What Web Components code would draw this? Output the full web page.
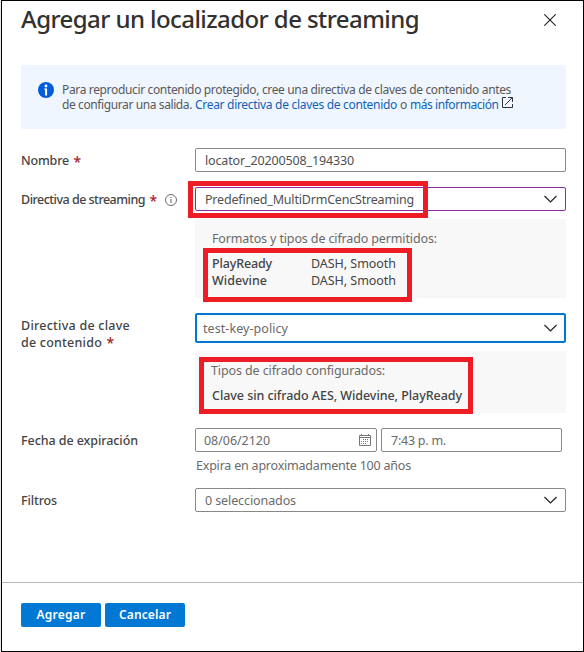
<!DOCTYPE html>
<html lang="es">
<head>
<meta charset="utf-8">
<title>Agregar un localizador de streaming</title>
<style>
html,body{margin:0;width:584px;height:652px;overflow:hidden;background:#e9e9ee}
body{font-family:"Noto Sans","Open Sans",sans-serif;font-size:12.5px;color:#505050}
</style>
</head>
<body>
<locator-dialog></locator-dialog>
<script>
const define = (name, html, setup) => customElements.define(name, class extends HTMLElement {
  connectedCallback() {
    if (this.shadowRoot) return;
    this.attachShadow({mode: 'open'}).innerHTML = html;
    if (setup) setup(this, this.shadowRoot);
  }
});

/* One run of text, tracked so that it spans the width given in "w". */
define('fit-text', `<style>
:host{display:inline-block;white-space:pre;line-height:16px;padding-top:2px;flex:none}
:host([bold]){font-weight:500}
:host([bold=strong]){font-weight:600}
:host([link]){color:#0f62b8}
span{display:inline-block}
</style><span><slot></slot></span>`, (host, root) => {
  const w = parseFloat(host.getAttribute('w'));
  const size = host.getAttribute('size');
  if (size) host.style.fontSize = size + 'px';
  const natural = root.querySelector('span').getBoundingClientRect().width;
  host.style.letterSpacing = ((w - natural) / host.textContent.length) + 'px';
  host.style.width = w + 'px';
});

define('info-badge', `<style>:host{display:block;width:16px;height:16px}svg{display:block}</style>
<svg width="16" height="16" viewBox="0 0 16 16"><circle cx="8" cy="8" r="8" fill="#015cda"/><circle cx="8" cy="4" r="1.4" fill="#fff"/><path d="M6.3 6.5H9.1V13.5H7.1V7.8H6.3z" fill="#fff"/></svg>`);

define('info-outline', `<style>:host{display:block;width:12px;height:12px}svg{display:block}</style>
<svg width="12" height="12" viewBox="0 0 12 12"><circle cx="6" cy="6" r="5.5" fill="none" stroke="#605e5c" stroke-width=".9"/><path d="M6 5V9M6 3V4" stroke="#605e5c"/></svg>`);

define('close-icon', `<style>:host{display:block;width:12px;height:12px}svg{display:block}</style>
<svg width="12" height="12" viewBox="0 0 12 12"><path d="M.3 .3L11.700 11.700M11.700 .3L.3 11.700" stroke="#222" stroke-width="1.1"/></svg>`);

define('external-icon', `<style>:host{display:block;width:11px;height:11px}svg{display:block}</style>
<svg width="11" height="11" viewBox="0 0 11 11" fill="none" stroke="#333" stroke-width="1"><path d="M4 .5H.5V10.5H10.5V7M6 .5H10.5V5M10.200 .8L3 8"/></svg>`);

define('calendar-icon', `<style>:host{display:block;width:12px;height:12px}svg{display:block}</style>
<svg width="12" height="12" viewBox="0 0 12 12" fill="none" stroke="#777"><path d="M.5 1.500H11.500V11.500H.5zM.5 3.500H11.500M2.500 0V2M9.500 0V2"/><path d="M4 5.500H10M2 7.500H10M2 9.500H8" stroke-dasharray="1 1"/></svg>`);

define('required-mark', `<style>:host{display:block;width:6px;height:17px;color:#a4262c;font:600 14px/19px "Open Sans","Noto Sans",sans-serif;text-indent:-.5px}</style>*`);

define('info-banner', `<style>
:host{display:flex;box-sizing:border-box;width:545px;height:64px;padding:17px 0 0 17px;background:#eff6ff;border-radius:2px;color:#595959}
.copy{margin-left:8px}
.line{display:flex;height:15px;align-items:center;gap:4px}
.line+.line{gap:3px}
.line fit-text{line-height:15px;padding-top:0;height:15px}
external-icon{margin-top:-4px}
</style><info-badge></info-badge><div class="copy">
<div class="line"><fit-text w="449" size="12">Para reproducir contenido protegido, cree una directiva de claves de contenido antes</fit-text></div>
<div class="line"><fit-text w="130" size="12">de configurar una salida.</fit-text><fit-text link w="202" size="12">Crear directiva de claves de contenido</fit-text><fit-text w="7" size="12">o</fit-text><fit-text link w="88.500" size="12">más información</fit-text><external-icon></external-icon></div></div>`);

/* Bordered field; attribute "arrow" adds the chevron, "tone" picks the border. */
define('field-box', `<style>
:host{display:flex;align-items:center;box-sizing:border-box;width:371px;height:24px;border:1px solid #8a8886;border-radius:2px;background:#fff;padding-left:var(--inset,9px);padding-right:10px;color:#505050}
:host([tone=purple]){border-color:#8a2da5}
:host([tone=blue]){border:2px solid #0078d4;height:30px}
svg{display:none;margin-left:auto;flex:none}
:host([arrow]) svg{display:block}
:host([arrow]){padding-right:8px}
:host([arrow][tone=blue]){padding-right:7px}
::slotted(calendar-icon){margin-left:auto;margin-right:-5px}
</style><slot></slot><svg width="13" height="8" viewBox="0 0 13 8"><path d="M.5 1L6.500 7L12.500 1" fill="none" stroke="#222" stroke-width="1.2"/></svg>`);

define('form-row', `<style>
:host{display:grid;grid-template-columns:174px 1fr;align-items:start}
.label{display:flex;flex-wrap:wrap;gap:0 5px;align-items:center;padding-top:var(--label-top,3px)}
</style><div class="label"><slot name="label"></slot></div><div><slot></slot></div>`);

define('detail-panel', `<style>
:host{display:block;box-sizing:border-box;width:371px;background:#f8f8f8;padding:10px 0 0 17px;margin-top:8px;color:#444}
</style><slot></slot>`);

define('push-button', `<style>
:host{display:flex;width:80px;height:24px;align-items:center;justify-content:center;background:#0078d4;border-radius:2px;color:#fff}
</style><slot></slot>`);

/* Red callout outline laid over the form. */
define('callout-frame', `<style>:host{display:block;position:absolute;box-sizing:border-box;border:5px solid #ee1c25}</style>`, host => {
  const [x, y, w, h] = host.getAttribute('box').split(' ');
  Object.assign(host.style, {left: x + 'px', top: y + 'px', width: w + 'px', height: h + 'px'});
});

define('locator-dialog', `<style>
:host{display:flex;flex-direction:column;position:relative;box-sizing:border-box;width:583px;height:652px;margin-left:1px;border:1px solid #000;background:#fff}
header{display:flex;height:64px;padding:0 27px 0 19px;box-sizing:border-box;align-items:flex-start;justify-content:space-between;color:#323130}
header fit-text{line-height:36px;padding-top:0}
header close-icon{margin-top:13px}
main{padding-left:19px;height:517px;box-sizing:border-box}
form-row{color:#444}
.muted{color:#6a6a6a}
.facts{display:grid;grid-template-columns:99px 1fr;margin-top:7px}
.facts fit-text{line-height:15px}
footer{display:flex;gap:4px;padding:20px 0 0 19px;border-top:1px solid #bababa}
footer fit-text{padding-top:0}
.pair{display:flex;gap:4px}
</style>
<header><fit-text bold size="24" w="398">Agregar un localizador de streaming</fit-text><close-icon></close-icon></header>
<main>
<info-banner></info-banner>
<form-row style="margin-top:19px"><fit-text slot="label" bold w="48">Nombre</fit-text><required-mark slot="label"></required-mark>
<field-box><fit-text w="149">locator_20200508_194330</fit-text></field-box></form-row>
<form-row style="margin-top:15px"><fit-text slot="label" bold w="124">Directiva de streaming</fit-text><required-mark slot="label"></required-mark><info-outline slot="label" style="margin:1px 0 0 4px"></info-outline>
<field-box arrow tone="purple"><fit-text w="209">Predefined_MultiDrmCencStreaming</fit-text></field-box>
<detail-panel style="height:79px"><fit-text class="muted" w="225">Formatos y tipos de cifrado permitidos:</fit-text>
<div class="facts"><fit-text bold w="60">PlayReady</fit-text><fit-text w="85">DASH, Smooth</fit-text><fit-text bold w="55">Widevine</fit-text><fit-text w="85">DASH, Smooth</fit-text></div></detail-panel></form-row>
<form-row style="margin-top:15px;--label-top:3px"><fit-text slot="label" bold w="109" style="margin-right:40px;line-height:15px">Directiva de clave</fit-text><fit-text slot="label" bold w="81" style="line-height:15px">de contenido</fit-text><required-mark slot="label"></required-mark>
<field-box arrow tone="blue" style="--inset:6px"><fit-text class="muted" w="85">test-key-policy</fit-text></field-box>
<detail-panel style="height:62px"><fit-text class="muted" w="174" style="margin-left:-1px">Tipos de cifrado configurados:</fit-text><div style="margin-top:7px"><fit-text bold w="250">Clave sin cifrado AES, Widevine, PlayReady</fit-text></div></detail-panel></form-row>
<form-row style="margin-top:15px"><fit-text slot="label" bold w="117">Fecha de expiración</fit-text>
<div class="pair"><field-box style="width:182px;--inset:8px"><fit-text class="muted" w="66">08/06/2120</fit-text><calendar-icon></calendar-icon></field-box><field-box style="width:181px"><fit-text class="muted" w="55">7:43 p. m.</fit-text></field-box></div>
<div style="padding:4px 0 0 1px;height:32px"><fit-text class="muted" w="215">Expira en aproximadamente 100 años</fit-text></div></form-row>
<form-row><fit-text slot="label" bold w="36">Filtros</fit-text>
<field-box arrow><fit-text class="muted" w="91">0 seleccionados</fit-text></field-box></form-row>
</main>
<footer><push-button><fit-text bold="strong" size="12" w="49">Agregar</fit-text></push-button><push-button><fit-text bold="strong" size="12" w="52">Cancelar</fit-text></push-button></footer>
<callout-frame box="186 180 240 37"></callout-frame>
<callout-frame box="201 247 209 54"></callout-frame>
<callout-frame box="197 356 274 57"></callout-frame>`);
</script>
</body>
</html>
